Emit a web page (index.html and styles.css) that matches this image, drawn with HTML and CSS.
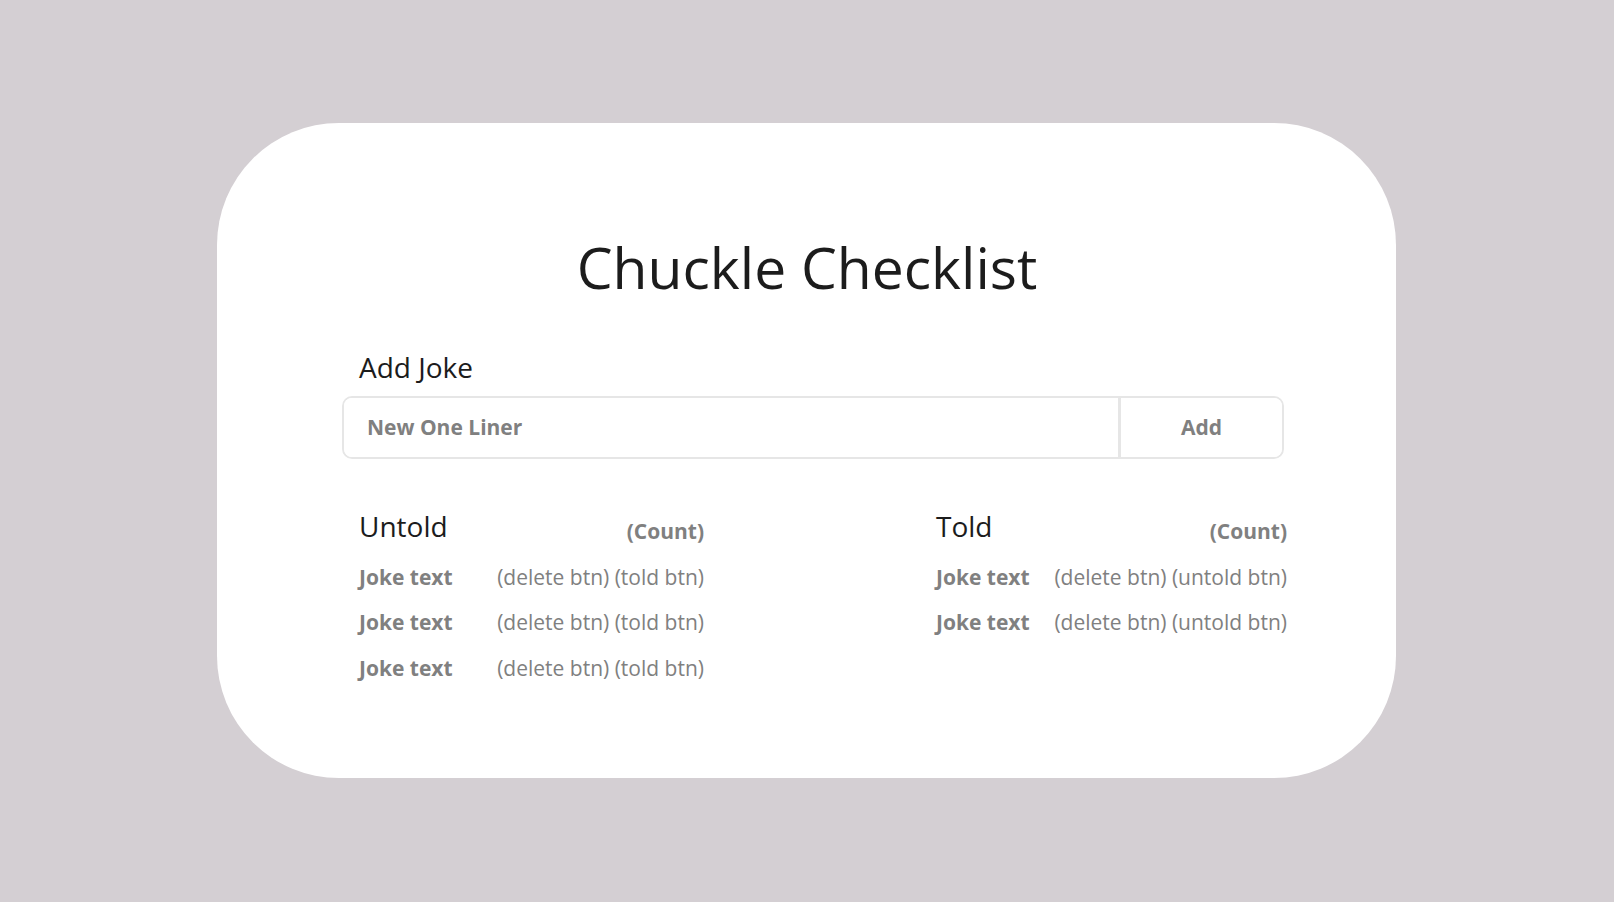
FILE: index.html
```html
<!DOCTYPE html>
<html lang="en">
<head>
<meta charset="utf-8">
<title>Chuckle Checklist</title>
<link rel="stylesheet" href="styles.css">
</head>
<body>
<main class="card">
  <h1 class="title">Chuckle Checklist</h1>
  <section class="add">
    <label class="add-label" for="joke">Add Joke</label>
    <div class="input-group">
      <input id="joke" class="joke-input" type="text" placeholder="New One Liner">
      <button class="add-btn" type="button">Add</button>
    </div>
  </section>
  <section class="lists">
    <div class="list list-untold">
      <div class="list-head"><h2 class="list-title">Untold</h2><span class="count">(Count)</span></div>
      <div class="row"><span class="joke">Joke text</span><span class="actions">(delete btn) (told btn)</span></div>
      <div class="row"><span class="joke">Joke text</span><span class="actions">(delete btn) (told btn)</span></div>
      <div class="row"><span class="joke">Joke text</span><span class="actions">(delete btn) (told btn)</span></div>
    </div>
    <div class="list list-told">
      <div class="list-head"><h2 class="list-title">Told</h2><span class="count">(Count)</span></div>
      <div class="row"><span class="joke">Joke text</span><span class="actions">(delete btn) (untold btn)</span></div>
      <div class="row"><span class="joke">Joke text</span><span class="actions">(delete btn) (untold btn)</span></div>
    </div>
  </section>
</main>
</body>
</html>
```

FILE: styles.css
```css
* { box-sizing: border-box; }

html, body {
  margin: 0;
  height: 100%;
}

body {
  background: #d4cfd3;
  font-family: "Open Sans", "Noto Sans", sans-serif;
  display: flex;
  align-items: center;
  justify-content: center;
}

.card {
  width: 1179px;
  height: 655px;
  background: #ffffff;
  border-radius: 122px;
  padding: 109px 0 0 125px;
  margin: -2px 0 0 -1px;
}

.title {
  margin: 0 0 0 -125px;
  font-size: 57px;
  line-height: 70px;
  font-weight: 400;
  color: #1c1c1c;
  text-align: center;
  padding-left: 1px;
}

.add {
  width: 942px;
  margin-top: 48px;
}

.add-label {
  display: block;
  padding-left: 17px;
  font-size: 28px;
  line-height: 34px;
  color: #1c1c1c;
}

.input-group {
  margin-top: 12px;
  display: flex;
  height: 63px;
  border: 2px solid #e6e6e6;
  border-radius: 10px;
  overflow: hidden;
}

.joke-input {
  flex: 1;
  min-width: 0;
  border: 0;
  outline: none;
  padding: 0 0 0 23px;
  font-family: inherit;
  font-size: 21px;
  font-weight: 700;
  color: #333;
  background: #fff;
}

.joke-input::placeholder {
  color: #808080;
  opacity: 1;
}

.add-btn {
  width: 164px;
  border: 0;
  border-left: 3px solid #e6e6e6;
  background: #fff;
  font-family: inherit;
  font-size: 21px;
  font-weight: 700;
  color: #808080;
  padding: 0;
}

.lists {
  display: flex;
  margin-top: 50px;
  padding-left: 17px;
}

.list-untold { width: 345px; }
.list-told { width: 351px; margin-left: 232px; }

.list-head {
  display: flex;
  justify-content: space-between;
  align-items: flex-end;
  margin-bottom: 12px;
}

.list-title {
  margin: 0;
  font-size: 28px;
  line-height: 34px;
  font-weight: 400;
  color: #1c1c1c;
}

.count {
  font-size: 21px;
  line-height: 24px;
  font-weight: 700;
  color: #808080;
}

.row {
  display: flex;
  justify-content: space-between;
  font-size: 21px;
  line-height: 45.5px;
  color: #808080;
}

.joke { font-weight: 700; }
.actions { font-weight: 400; }
```
